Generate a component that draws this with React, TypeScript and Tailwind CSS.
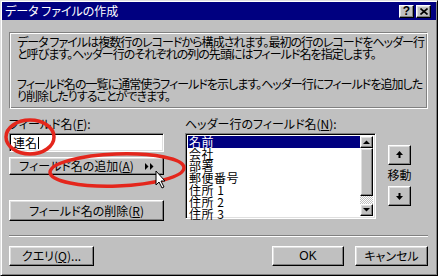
import React from 'react'

const raised =
  'border border-t-white border-l-white border-r-black border-b-black shadow-[inset_-1px_-1px_#808080,inset_1px_1px_#dfdfdf] bg-[#c0c0c0]'
const sunken =
  'border border-t-[#808080] border-l-[#808080] border-r-white border-b-white shadow-[inset_1px_1px_#000,inset_-1px_-1px_#dfdfdf]'

function U({ children }: { children: React.ReactNode }) {
  return <span className="underline underline-offset-1">{children}</span>
}

function Btn({ className, children }: { className?: string; children: React.ReactNode }) {
  return (
    <div className={`${raised} flex items-center justify-center whitespace-nowrap text-[12px] leading-none text-black ${className ?? ''}`}>
      {children}
    </div>
  )
}

function Tri({ dir }: { dir: 'up' | 'down' | 'right' }) {
  const pts = dir === 'up' ? '0,4 7,4 3.5,0.5' : dir === 'down' ? '0,0 7,0 3.5,3.5' : '0,0 0,7 3.5,3.5'
  const w = dir === 'right' ? 4 : 7
  const h = dir === 'right' ? 7 : 4
  return (
    <svg width={w} height={h} viewBox={`0 0 ${w} ${h}`}>
      <polygon points={pts} fill="#000" />
    </svg>
  )
}

function MoveArrow({ down }: { down?: boolean }) {
  return (
    <svg width="7" height="8" viewBox="0 0 7 8" className={down ? 'rotate-180' : ''}>
      <polygon points="3.5,0 7,4 0,4" fill="#000" />
      <rect x="2.5" y="4" width="2" height="3" fill="#000" />
    </svg>
  )
}

const fields = ['名前', '会社', '部署', '郵便番号', '住所 1', '住所 2', '住所 3']

export default function App() {
  return (
    <div className="relative w-[438px] h-[276px] overflow-hidden bg-[#c0c0c0] border border-t-[#dfdfdf] border-l-[#dfdfdf] border-r-black border-b-black shadow-[inset_1px_1px_white,inset_-1px_-1px_#808080] p-[1px] flex flex-col font-['Noto_Sans_CJK_JP',sans-serif] [font-feature-settings:'palt'] text-black">
      {/* title bar */}
      <div className="h-[18px] bg-[#000080] flex items-center pl-[3px] pr-[5px]">
        <span className="text-white text-[12px] leading-none">データ ファイルの作成</span>
        <div className="ml-auto flex gap-[2px]">
          <Btn className="w-[15px] h-[13px] font-bold text-[11px] font-['Liberation_Sans',sans-serif]">?</Btn>
          <Btn className="w-[15px] h-[13px]">
            <svg width="8" height="7" viewBox="0 0 8 7">
              <path d="M0.5 0.5 L7.5 6.5 M7.5 0.5 L0.5 6.5" stroke="#000" strokeWidth="1.6" />
            </svg>
          </Btn>
        </div>
      </div>

      <div className="flex flex-col pl-[7px] pr-[8px] pt-[12px]">
        {/* description */}
        <div className="h-[77px] border border-t-[#808080] border-l-[#808080] border-r-white border-b-white shadow-[inset_1px_1px_white,inset_-1px_-1px_#808080] pl-[7px] pt-[3px] text-[12px] leading-[12px] tracking-[-0.95px] whitespace-nowrap">
          <p>データ ファイルは複数行のレコードから構成されます。最初の行のレコードをヘッダー行</p>
          <p>と呼びます。ヘッダー行のそれぞれの列の先頭にはフィールド名を指定します。</p>
          <p className="mt-[18px]">フィールド名の一覧に通常使うフィールドを示します。ヘッダー行にフィールドを追加した</p>
          <p>り削除したりすることができます。</p>
        </div>

        {/* fields */}
        <div className="flex mt-[9px] h-[110px]">
          <div className="w-[155px] flex flex-col text-[12px]">
            <div className="leading-[12px] h-[14px] whitespace-nowrap">
              フィールド名(<U>F</U>):
            </div>
            <div className={`${sunken} bg-white h-[19px] mt-[1px] pl-[3px] flex items-center leading-none`}>
              連名<span className="inline-block w-[1px] h-[12px] bg-black ml-[1px]" />
            </div>
            <Btn className="h-[18px] mt-[5px] gap-[1px]">
              <span>フィールド名の追加(<U>A</U>)</span>
              <span className="flex ml-[10px] gap-[1px]">
                <Tri dir="right" />
                <Tri dir="right" />
              </span>
            </Btn>
            <Btn className="h-[21px] mt-[25px]">
              フィールド名の削除(<U>R</U>)
            </Btn>
          </div>

          <div className="ml-[21px] flex flex-col text-[12px]">
            <div className="leading-[12px] h-[14px] whitespace-nowrap">
              ヘッダー行のフィールド名(<U>N</U>):
            </div>
            <div className={`${sunken} bg-white w-[191px] h-[86px] mt-[1px] p-[2px] flex`}>
              <ul className="flex-1 leading-[12px] tracking-[0.5px]">
                {fields.map((f, i) => (
                  <li key={f} className={`pl-[1px] h-[12px] ${i === 0 ? 'bg-[#000080] text-white' : ''}`}>
                    {f}
                  </li>
                ))}
              </ul>
              <div className="w-[13px] flex flex-col">
                <Btn className="h-[12px]">
                  <Tri dir="up" />
                </Btn>
                <Btn className="h-[48px]">{null}</Btn>
                <div className="flex-1 bg-[repeating-conic-gradient(#c0c0c0_0_25%,#fff_0_50%)] bg-[length:2px_2px]" />
                <Btn className="h-[12px]">
                  <Tri dir="down" />
                </Btn>
              </div>
            </div>
          </div>

          <div className="ml-[12px] mt-[27px] w-[23px] flex flex-col items-center">
            <Btn className="w-[23px] h-[20px]">
              <MoveArrow />
            </Btn>
            <div className="text-[12px] leading-[20px] h-[21px] whitespace-nowrap">移動</div>
            <Btn className="w-[23px] h-[20px]">
              <MoveArrow down />
            </Btn>
          </div>
        </div>

        {/* separator */}
        <div className="mt-[7px] h-[2px] border-t border-t-[#808080] border-b border-b-white" />

        {/* bottom buttons */}
        <div className="flex mt-[9px]">
          <Btn className="w-[85px] h-[20px]">
            クエリ(<U>Q</U>)...
          </Btn>
          <Btn className="ml-auto w-[72px] h-[20px] font-['Liberation_Sans',sans-serif]">OK</Btn>
          <Btn className="ml-[11px] w-[73px] h-[20px]">キャンセル</Btn>
        </div>
      </div>

      {/* annotations */}
      <svg className="absolute left-0 top-0 pointer-events-none" width="438" height="276">
        <ellipse cx="29" cy="136" rx="24" ry="17" fill="none" stroke="#e4261c" strokeWidth="3.5" />
        <ellipse cx="116" cy="169" rx="67" ry="16" fill="none" stroke="#e4261c" strokeWidth="3.5" transform="rotate(-2 116 169)" />
        <path d="M155 170 L155 184 L158 181 L161 187 L163 186 L160 180 L164 180 Z" fill="#fff" stroke="#000" strokeWidth="1" />
      </svg>
    </div>
  )
}
